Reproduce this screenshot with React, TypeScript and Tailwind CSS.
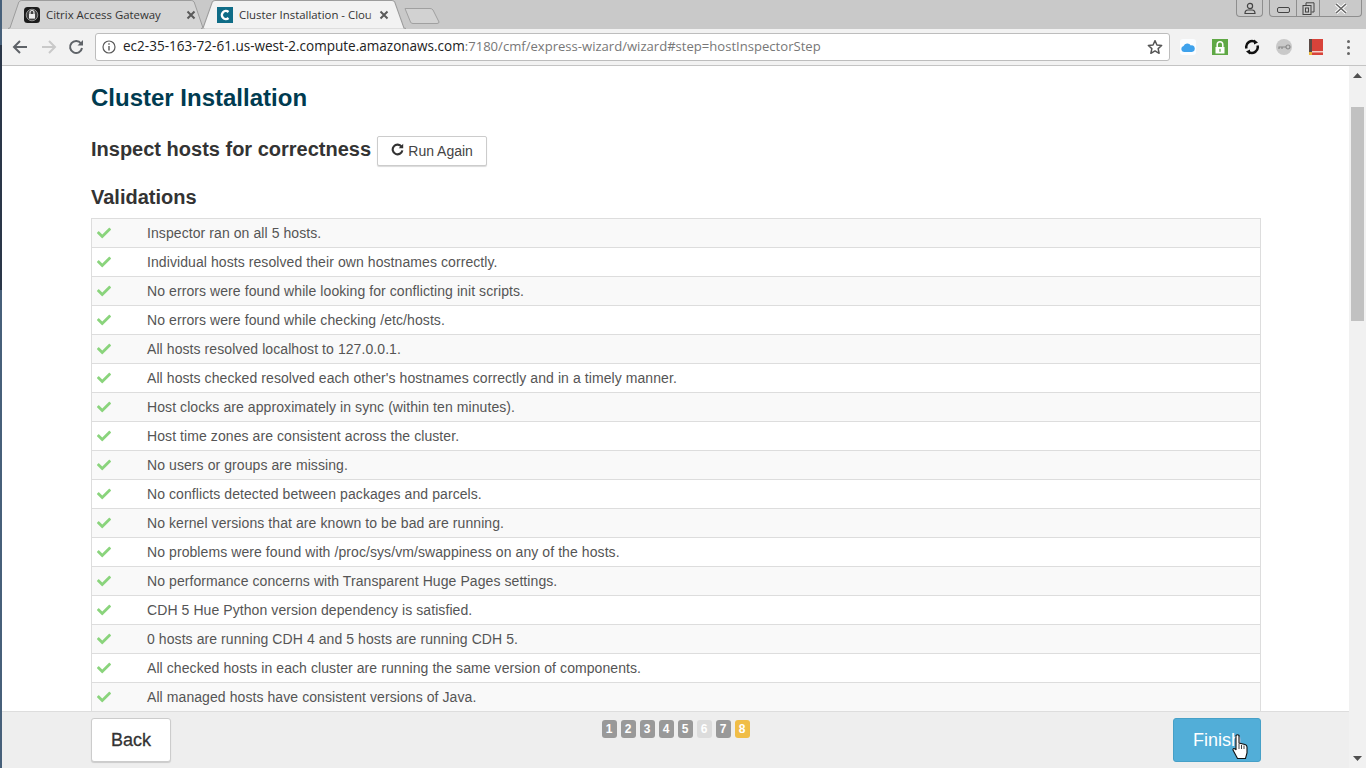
import React from "react";
import { FaCheck } from "react-icons/fa";

const rows = [
  "Inspector ran on all 5 hosts.",
  "Individual hosts resolved their own hostnames correctly.",
  "No errors were found while looking for conflicting init scripts.",
  "No errors were found while checking /etc/hosts.",
  "All hosts resolved localhost to 127.0.0.1.",
  "All hosts checked resolved each other's hostnames correctly and in a timely manner.",
  "Host clocks are approximately in sync (within ten minutes).",
  "Host time zones are consistent across the cluster.",
  "No users or groups are missing.",
  "No conflicts detected between packages and parcels.",
  "No kernel versions that are known to be bad are running.",
  "No problems were found with /proc/sys/vm/swappiness on any of the hosts.",
  "No performance concerns with Transparent Huge Pages settings.",
  "CDH 5 Hue Python version dependency is satisfied.",
  "0 hosts are running CDH 4 and 5 hosts are running CDH 5.",
  "All checked hosts in each cluster are running the same version of components.",
  "All managed hosts have consistent versions of Java.",
];

const steps = ["1", "2", "3", "4", "5", "6", "7", "8"];

function TabShape({ active }: { active?: boolean }) {
  return (
    <svg className="absolute inset-0 h-full w-full" viewBox="0 0 200 29" preserveAspectRatio="none">
      <path
        d="M0 28.5 L2 28 L11 2 Q12 0.5 14 0.5 L186 0.5 Q188 0.5 189 2 L198 28 L200 28.5"
        fill={active ? "#f2f2f2" : "#d4d4d4"}
        stroke="#9c9c9c"
        strokeWidth="1"
      />
    </svg>
  );
}

function Tab({ title, active, icon, w, pr }: { title: string; active?: boolean; icon: React.ReactNode; w: string; pr: string }) {
  return (
    <div className={`relative h-[29px] ${w} -mr-[4px] shrink-0`}>
      <TabShape active={active} />
      <div className={`relative flex h-full items-center pl-[16px] ${pr}`}>
        {icon}
        <span className="relative ml-[6px] flex-1 whitespace-nowrap text-[11.4px] text-[#333] [font-family:'Open_Sans',sans-serif]">
          {title}
          {active && <span className="absolute right-[-4px] top-0 h-full w-[12px] bg-gradient-to-r from-transparent to-[#f2f2f2]" />}
        </span>
        <svg width="10" height="10" viewBox="0 0 10 10" className="ml-[4px] shrink-0">
          <path d="M1.5 1.5 L8.5 8.5 M8.5 1.5 L1.5 8.5" stroke="#5a5a5a" strokeWidth="2" />
        </svg>
      </div>
    </div>
  );
}

export default function App() {
  return (
    <div className="relative flex h-[768px] w-[1366px] flex-col overflow-hidden bg-white [font-family:'Liberation_Sans',Arial,sans-serif]">
      {/* tab strip */}
      <div className="flex h-[29px] shrink-0 items-start bg-[#c9c9c9] pl-[8px]">
        <Tab
          title="Citrix Access Gateway"
          w="w-[197px]"
          pr="pr-[9px]"
          icon={
            <svg width="16" height="16" viewBox="0 0 16 16" className="shrink-0">
              <rect width="16" height="16" rx="3.5" fill="#1c1c1c" />
              <circle cx="8" cy="8" r="5.8" fill="#444" stroke="#aaa" strokeWidth="0.8" />
              <rect x="5" y="7" width="6" height="4.6" fill="#eee" />
              <path d="M6 7V5.5a2 2 0 0 1 4 0V7" fill="none" stroke="#eee" strokeWidth="1.2" />
            </svg>
          }
        />
        <Tab
          title="Cluster Installation - Clou"
          active
          w="w-[205px]"
          pr="pr-[17px]"
          icon={
            <svg width="16" height="16" viewBox="0 0 16 16" className="shrink-0">
              <rect width="16" height="16" fill="#0f6c87" />
              <path d="M11.5 5 A4 4 0 1 0 11.5 11" fill="none" stroke="#fff" strokeWidth="2.4" />
            </svg>
          }
        />
        <svg width="36" height="18" viewBox="0 0 36 18" className="ml-[2px] mt-[7px] shrink-0">
          <path d="M1 1.5 L26 1.5 Q28 1.5 29 3 L35 15 Q35 16.5 33 16.5 L9 16.5 Q7 16.5 6.5 15 Z" fill="#d2d2d2" stroke="#a0a0a0" />
        </svg>
        <div className="flex-1" />
        <div className="flex h-[17px] w-[27px] items-center justify-center rounded-b-[4px] border border-t-0 border-[#8e8e8e]">
          <svg width="14" height="13" viewBox="0 0 14 13">
            <circle cx="7" cy="4" r="2.6" fill="none" stroke="#444" strokeWidth="1.2" />
            <path d="M2 11.5 Q2 8 5 8 L9 8 Q12 8 12 11.5 Z" fill="none" stroke="#444" strokeWidth="1.2" />
          </svg>
        </div>
        <div className="ml-[6px] mr-[4px] flex h-[17px] w-[93px] items-center rounded-b-[4px] border border-t-0 border-[#8e8e8e]">
          <div className="flex h-full w-[27px] items-center justify-center border-r border-[#8e8e8e]">
            <div className="mt-[4px] h-[6px] w-[13px] rounded-[2px] border border-[#444]" />
          </div>
          <div className="flex h-full w-[23px] items-center justify-center border-r border-[#8e8e8e]">
            <svg width="13" height="13" viewBox="0 0 13 13">
              <rect x="1" y="3.5" width="8" height="9" fill="none" stroke="#444" />
              <path d="M4 3V0.8H12V10H9.5" fill="none" stroke="#444" />
              <rect x="3.5" y="6" width="3" height="4" fill="none" stroke="#444" />
            </svg>
          </div>
          <div className="flex h-full flex-1 items-center justify-center">
            <svg width="14" height="11" viewBox="0 0 14 11">
              <path d="M2 1 L12 10 M12 1 L2 10" stroke="#fff" strokeWidth="3.4" />
              <path d="M2 1 L12 10 M12 1 L2 10" stroke="#666" strokeWidth="1.6" />
            </svg>
          </div>
        </div>
      </div>

      {/* toolbar */}
      <div className="flex h-[37px] shrink-0 items-center border-b border-[#c4c4c4] bg-[#f2f2f2]">
        <div className="flex w-[95px] shrink-0 items-center">
          <svg width="16" height="16" viewBox="0 0 16 16" className="ml-[12px]">
            <path d="M15 8 H2.5 M8 2 L2 8 L8 14" fill="none" stroke="#5f6368" strokeWidth="2" />
          </svg>
          <svg width="16" height="16" viewBox="0 0 16 16" className="ml-[13px]">
            <path d="M1 8 H13.5 M8 2 L14 8 L8 14" fill="none" stroke="#c9c9c9" strokeWidth="2" />
          </svg>
          <svg width="16" height="16" viewBox="0 0 16 16" className="ml-[11px]">
            <path d="M13 4.5 A6 6 0 1 0 14 9" fill="none" stroke="#5f6368" strokeWidth="2" />
            <path d="M9.5 6.5 H15 V1 Z" fill="#5f6368" />
          </svg>
        </div>
        <div className="flex h-[28px] w-[1075px] shrink-0 items-center rounded-[3px] border border-[#bdbdbd] bg-white">
          <svg width="14" height="14" viewBox="0 0 14 14" className="ml-[6px] shrink-0">
            <circle cx="7" cy="7" r="6" fill="none" stroke="#5a5a5a" strokeWidth="1.2" />
            <path d="M7 6 V10.5 M7 3.2 V4.8" stroke="#5a5a5a" strokeWidth="1.4" />
          </svg>
          <div className="ml-[7px] flex-1 whitespace-nowrap text-[13.08px] leading-none text-[#777] [font-family:'Open_Sans',sans-serif]">
            <span className="text-[13.54px] text-[#222]">ec2-35-163-72-61.us-west-2.compute.amazonaws.com</span>:7180/cmf/express-wizard/wizard#step=hostInspectorStep
          </div>
          <svg width="16" height="16" viewBox="0 0 24 24" className="mr-[6px] shrink-0">
            <path d="M12 2.5 L14.9 9 L22 9.7 L16.7 14.4 L18.2 21.4 L12 17.8 L5.8 21.4 L7.3 14.4 L2 9.7 L9.1 9 Z" fill="none" stroke="#555" strokeWidth="2.2" strokeLinejoin="round" />
          </svg>
        </div>
        <div className="flex flex-1 items-center">
          <div className="ml-[10px] flex h-[16px] w-[16px] items-center justify-center rounded-[3px] bg-[#fbfdff]">
            <svg width="14" height="9" viewBox="0 0 14 9">
              <path d="M3 9 A3 3 0 0 1 2.6 3.1 A4 4 0 0 1 9.8 2.4 A3.3 3.3 0 0 1 11 9 Z" fill="#3ea2ec" />
            </svg>
          </div>
          <div className="ml-[16px] flex h-[16px] w-[16px] items-center justify-center bg-[#5fa845]">
            <svg width="10" height="13" viewBox="0 0 10 13">
              <path d="M2.2 6V3.6a2.8 2.8 0 0 1 5.6 0V6" fill="none" stroke="#fff" strokeWidth="1.5" />
              <rect x="0.5" y="6" width="9" height="6.5" fill="#fff" />
              <rect x="4.4" y="7.8" width="1.2" height="3" fill="#5fa845" />
            </svg>
          </div>
          <svg width="16" height="16" viewBox="0 0 16 16" className="ml-[16px]">
            <path d="M2.5 9.5 A5.8 5.8 0 0 1 11.5 3.2 M13.5 6.5 A5.8 5.8 0 0 1 4.5 12.8" fill="none" stroke="#111" strokeWidth="2.5" />
            <path d="M10 0.5 L14 3.5 L10 5.5 Z M6 15.5 L2 12.5 L6 10.5 Z" fill="#111" />
          </svg>
          <div className="ml-[16px] flex h-[16px] w-[16px] items-center justify-center rounded-full bg-[#c9c9c9]">
            <svg width="13" height="6" viewBox="0 0 13 6">
              <circle cx="10" cy="3" r="2" fill="none" stroke="#8a8a8a" strokeWidth="1.2" />
              <path d="M8 3 H1 V5 M4 3 V5" fill="none" stroke="#8a8a8a" strokeWidth="1.2" />
            </svg>
          </div>
          <svg width="16" height="16" viewBox="0 0 16 16" className="ml-[16px]">
            <rect x="1" y="0" width="14" height="16" fill="#d8433a" />
            <rect x="1" y="0" width="3" height="16" fill="#5b4a45" />
            <rect x="4" y="12" width="11" height="1.5" fill="#f4d0c8" />
            <rect x="1" y="13" width="3" height="3" fill="#e9b83a" />
          </svg>
          <div className="ml-[23px] flex flex-col gap-[3px]">
            <div className="h-[3px] w-[3px] rounded-full bg-[#666]" />
            <div className="h-[3px] w-[3px] rounded-full bg-[#666]" />
            <div className="h-[3px] w-[3px] rounded-full bg-[#666]" />
          </div>
        </div>
      </div>

      {/* page */}
      <div className="flex min-h-0 flex-1">
        <div className="w-[2px] shrink-0" />
        <div className="flex w-[1347px] min-w-0 shrink-0 flex-col">
          <div className="min-h-0 flex-1 overflow-hidden pl-[89px] pr-[88px]">
            <h1 className="mt-[16px] text-[24px] font-bold leading-[31px] text-[#003b50]">Cluster Installation</h1>
            <div className="mt-[21px] flex h-[30px] items-start">
              <h2 className="text-[20px] font-bold leading-[30px] text-[#333]">Inspect hosts for correctness</h2>
              <button className="ml-[6px] mt-[2px] flex h-[30px] w-[110px] shrink-0 items-center justify-center rounded-[2px] border border-[#ccc] bg-white text-[14px] text-[#444] shadow-[0_1px_1px_rgba(0,0,0,0.15)]">
                <svg width="13" height="13" viewBox="0 0 16 16" className="mb-[3px] mr-[4px]">
                  <path d="M13 4.5 A6 6 0 1 0 14 9" fill="none" stroke="#333" strokeWidth="2.6" />
                  <path d="M9.5 6.5 H15 V1 Z" fill="#333" />
                </svg>
                Run Again
              </button>
            </div>
            <h2 className="mt-[20px] text-[20px] font-bold leading-[26px] text-[#333]">Validations</h2>
            <div className="mt-[8px] border-x border-t border-[#ddd]">
              {rows.map((r, i) => (
                <div key={i} className={`flex h-[29px] items-center border-b border-[#ddd] ${i % 2 === 0 ? "bg-[#f9f9f9]" : "bg-white"}`}>
                  <FaCheck className="ml-[5px] shrink-0 text-[14px] text-[#8ad47c]" />
                  <span className="ml-[36px] text-[14px] tracking-[0.08px] text-[#555]">{r}</span>
                </div>
              ))}
            </div>
          </div>
          {/* footer */}
          <div className="relative flex h-[57px] shrink-0 items-start border-t border-[#ddd] bg-[#eee] pl-[89px] pr-[88px] pt-[6px]">
            <button className="h-[44px] w-[80px] rounded-[3px] border border-[#ccc] bg-white text-[18px] text-[#333] shadow-[0_1px_1px_rgba(0,0,0,0.15)] [-webkit-text-stroke:0.3px_#333]">Back</button>
            <div className="mt-[2px] flex flex-1 justify-center gap-[4px] pl-[7px]">
              {steps.map((s, i) => (
                <span key={s} className={`flex h-[18px] w-[15px] items-center justify-center rounded-[3px] text-[12px] font-bold text-white ${i === 7 ? "bg-[#f0bd47]" : i === 5 ? "bg-[#dcdcdc]" : "bg-[#999]"}`}>{s}</span>
              ))}
            </div>
            <button className="h-[44px] w-[88px] rounded-[3px] border border-[#46a0c7] bg-[#52aed8] text-[18px] text-white">Finish</button>
          </div>
        </div>
        {/* scrollbar */}
        <div className="flex w-[17px] shrink-0 flex-col bg-[#f1f1f1]">
          <svg width="9" height="5" viewBox="0 0 9 5" className="ml-[4px] mt-[7px]"><path d="M4.5 0 L9 5 H0 Z" fill="#505050" /></svg>
          <div className="ml-[2px] mt-[29px] h-[214px] w-[13px] bg-[#c1c1c1]" />
          <div className="flex-1" />
          <svg width="9" height="5" viewBox="0 0 9 5" className="mb-[7px] ml-[4px]"><path d="M4.5 5 L9 0 H0 Z" fill="#505050" /></svg>
        </div>
      </div>

      {/* desktop showing at the window's left edge */}
      <div className="absolute left-0 top-0 flex h-full w-[2px] flex-col bg-[#47607a]">
        <div className="mt-[45px] h-[245px] w-full bg-[#2a3648]" />
      </div>

      {/* mouse pointer */}
      <svg width="16" height="26" viewBox="0 0 16 26" className="absolute left-[1232px] top-[734px]">
        <path d="M4 1.5 Q5.5 0 7 1.5 V9 L13 10.5 Q15 11 15 13 V19 L13.5 24.5 H5.5 L1 16 Q0.5 14 3.5 15 L4 16 Z" fill="#fff" stroke="#111" strokeWidth="1.1" />
        <path d="M7 10 V15 M9.5 11 V15 M12 11.5 V15" stroke="#111" strokeWidth="0.8" />
      </svg>
    </div>
  );
}
